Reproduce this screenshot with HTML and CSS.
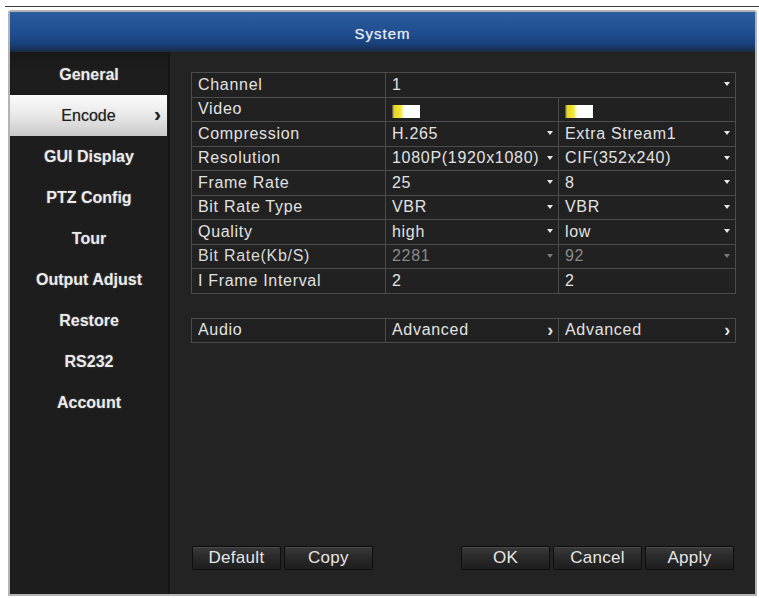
FILE: index.html
```html
<!DOCTYPE html>
<html lang="en">

<head>
    <meta charset="UTF-8" />
    <title>System - Encode</title>
    <link rel="stylesheet" href="styles.css">
</head>

<body>

    <div class="top-rule"></div>

    <div class="window">
        <div class="title">System</div>

        <div class="window-body">
            <nav class="menu">
                <div class="menu-item">General</div>
                <div class="menu-item active">Encode <span class="chev">&#8250;</span></div>
                <div class="menu-item">GUI Display</div>
                <div class="menu-item">PTZ Config</div>
                <div class="menu-item">Tour</div>
                <div class="menu-item">Output Adjust</div>
                <div class="menu-item">Restore</div>
                <div class="menu-item">RS232</div>
                <div class="menu-item">Account</div>
            </nav>

            <main class="panel">
                <table class="grid">
                    <colgroup>
                        <col class="col-label">
                        <col class="col-main">
                        <col class="col-extra">
                    </colgroup>
                    <tr>
                        <td class="label">Channel</td>
                        <td class="select" colspan="2">1</td>
                    </tr>
                    <tr>
                        <td class="label">Video</td>
                        <td><span class="swatch"></span></td>
                        <td><span class="swatch"></span></td>
                    </tr>
                    <tr>
                        <td class="label">Compression</td>
                        <td class="select">H.265</td>
                        <td class="select">Extra Stream1</td>
                    </tr>
                    <tr>
                        <td class="label">Resolution</td>
                        <td class="select">1080P(1920x1080)</td>
                        <td class="select">CIF(352x240)</td>
                    </tr>
                    <tr>
                        <td class="label">Frame Rate</td>
                        <td class="select">25</td>
                        <td class="select">8</td>
                    </tr>
                    <tr>
                        <td class="label">Bit Rate Type</td>
                        <td class="select">VBR</td>
                        <td class="select">VBR</td>
                    </tr>
                    <tr>
                        <td class="label">Quality</td>
                        <td class="select">high</td>
                        <td class="select">low</td>
                    </tr>
                    <tr class="disabled">
                        <td class="label">Bit Rate(Kb/S)</td>
                        <td class="select">2281</td>
                        <td class="select">92</td>
                    </tr>
                    <tr>
                        <td class="label">I Frame Interval</td>
                        <td>2</td>
                        <td>2</td>
                    </tr>
                </table>

                <table class="grid audio">
                    <colgroup>
                        <col class="col-label">
                        <col class="col-main">
                        <col class="col-extra">
                    </colgroup>
                    <tr>
                        <td class="label">Audio</td>
                        <td class="more">Advanced</td>
                        <td class="more">Advanced</td>
                    </tr>
                </table>

                <div class="actions">
                    <div class="btn-group">
                        <button class="btn">Default</button>
                        <button class="btn">Copy</button>
                    </div>
                    <div class="btn-group">
                        <button class="btn">OK</button>
                        <button class="btn">Cancel</button>
                        <button class="btn">Apply</button>
                    </div>
                </div>
            </main>
        </div>
    </div>

</body>

</html>
```

FILE: styles.css
```css
* {
    box-sizing: border-box;
    margin: 0;
    padding: 0;
    font-family: 'Liberation Sans', Arial, sans-serif;
}

body {
    width: 759px;
    height: 598px;
    background: #fff;
    padding-top: 6px;
    overflow: hidden;
}

.top-rule {
    height: 1px;
    margin-left: 5px;
    background: #3a3a3a;
}

.window {
    margin: 3px 0 0 8px;
    width: 749px;
    height: 586px;
    border: 2px solid #b4b4b4;
    border-radius: 3px 3px 0 0;
    background: #1c1c1c;
    display: flex;
    flex-direction: column;
}

.title {
    height: 40px;
    background: linear-gradient(#2c5d9e, #1f4d8f 55%, #183f78 82%, #1b2a40 100%);
    color: #e8ecf2;
    font-size: 15px;
    letter-spacing: 1px;
    text-shadow: 0 0 1px rgba(255, 255, 255, 0.6);
    text-align: center;
    line-height: 44px;
}

.window-body {
    flex: 1;
    display: flex;
    background: #1f1f1f;
}

/* left menu */

.menu {
    width: 160px;
    padding-top: 2px;
    background: linear-gradient(#181818, #1d1d1d 20px);
    border-right: 2px solid #151515;
}

.menu-item {
    height: 41px;
    line-height: 41px;
    text-align: center;
    color: #ececec;
    font-size: 16px;
    font-weight: 700;
    text-shadow: 0 0 2px rgba(255, 255, 255, 0.25);
    position: relative;
}

.menu-item.active {
    background: linear-gradient(#fbfbfb, #e8e8e8 50%, #c9c9c9);
    color: #1e1e1e;
    font-weight: 400;
    text-shadow: 0 0 1px rgba(0, 0, 0, 0.4);
    margin-right: 1px;
}

.menu-item .chev {
    position: absolute;
    right: 6px;
    top: -1px;
    font-weight: 700;
    font-size: 20px;
}

/* right panel */

.panel {
    flex: 1;
    padding: 20px 19px 24px 21px;
    display: flex;
    flex-direction: column;
    background: #232323;
}

.grid {
    width: 544px;
    border-collapse: collapse;
    table-layout: fixed;
}

.col-label {
    width: 194px;
}

.col-main {
    width: 173px;
}

.col-extra {
    width: 177px;
}

.grid td {
    height: 24.5px;
    border: 1px solid #4c4c4c;
    background: #212121;
    color: #e2e2e2;
    font-size: 16px;
    letter-spacing: 0.7px;
    padding: 0 6px;
    white-space: nowrap;
    overflow: hidden;
    position: relative;
}

.grid td.select::after {
    content: "";
    position: absolute;
    right: 5px;
    top: 9px;
    border-left: 3px solid transparent;
    border-right: 3px solid transparent;
    border-top: 4px solid #e8e8e8;
}

.grid .disabled td {
    color: #8a8a8a;
}

.grid .disabled td.label {
    color: #d8d8d8;
}

.grid .disabled td.select::after {
    border-top-color: #7a7a7a;
}

.grid td.more::after {
    content: "\203A";
    position: absolute;
    right: 4px;
    top: 0;
    font-weight: 700;
    font-size: 18px;
    line-height: 22px;
}

.swatch {
    display: inline-block;
    width: 28px;
    height: 13px;
    margin-top: 5px;
    vertical-align: top;
    background: linear-gradient(to right, #3a3a70 0, #e6d81a 2px, #f2e63a 30%, #fff 45%, #fff);
}

.audio {
    margin-top: 24px;
}

.actions {
    margin-top: auto;
    display: flex;
    justify-content: space-between;
    width: 543px;
    padding-left: 1px;
}

.btn-group {
    display: flex;
    gap: 3px;
}

.btn {
    width: 89px;
    height: 24px;
    border: 1px solid #0e0e0e;
    border-radius: 2px;
    background: linear-gradient(#3a3a3a, #2a2a2a 45%, #1e1e1e);
    box-shadow: inset 0 1px 0 #4a4a4a;
    color: #e6e6e6;
    font-size: 17px;
    letter-spacing: 0.3px;
}
```
